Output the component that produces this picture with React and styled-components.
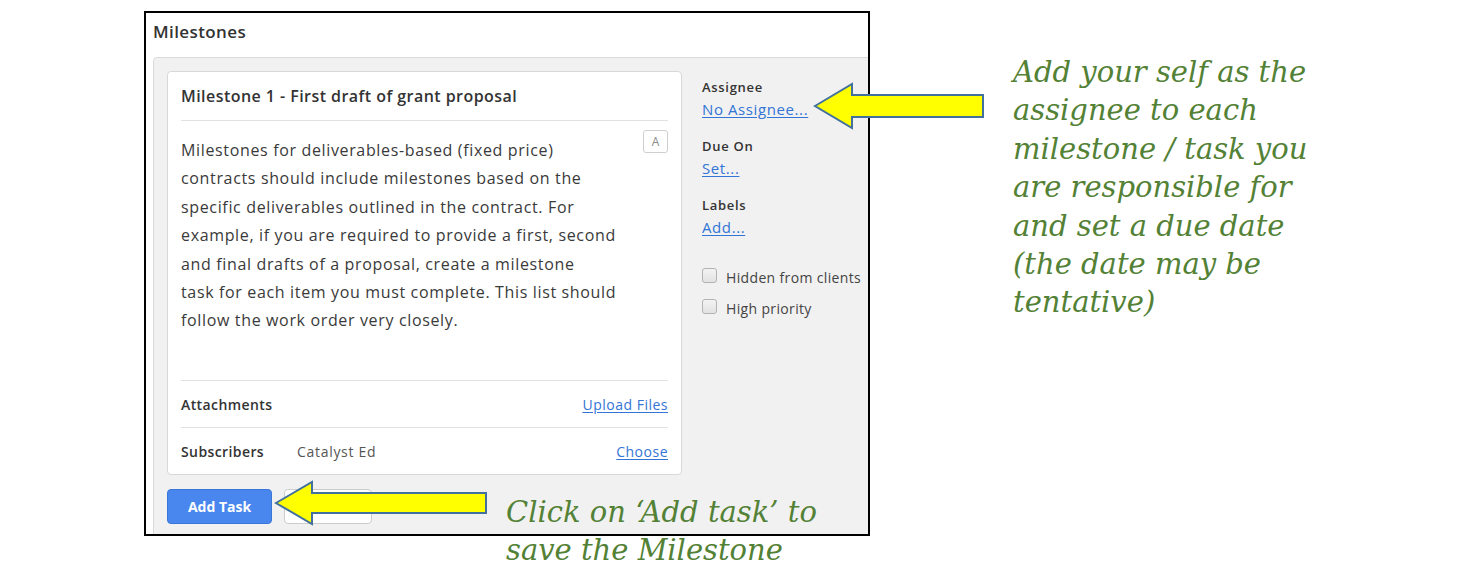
import React from "react";
import styled, { createGlobalStyle } from "styled-components";

const GlobalStyle = createGlobalStyle`
  html, body {
    margin: 0;
    padding: 0;
    background: #ffffff;
  }
  body {
    font-family: "Open Sans", "Liberation Sans", sans-serif;
    color: #333333;
  }
`;

const Stage = styled.div`
  position: relative;
  width: 1483px;
  height: 574px;
  overflow: hidden;
  background: #ffffff;
`;

const Frame = styled.div`
  box-sizing: border-box;
  margin: 11px 0 0 144px;
  width: 726px;
  height: 525px;
  border: 2px solid #000000;
  background: #ffffff;
  overflow: hidden;
  display: flex;
  flex-direction: column;
`;

const FrameHeader = styled.div`
  box-sizing: border-box;
  height: 44px;
  flex-shrink: 0;
  padding: 7px 0 0 7px;
  font-size: 17px;
  line-height: 24px;
  font-weight: 600;
  letter-spacing: 0.4px;
  color: #333333;
`;

const Panel = styled.div`
  box-sizing: border-box;
  flex: 1;
  margin-left: 7px;
  width: 740px;
  padding: 13px;
  background: #f1f1f1;
  border: 1px solid #dadada;
  border-radius: 4px;
`;

const PanelRow = styled.div`
  display: flex;
  align-items: flex-start;
`;

const Card = styled.div`
  box-sizing: border-box;
  width: 515px;
  height: 404px;
  background: #ffffff;
  border: 1px solid #d8d8d8;
  border-radius: 4px;
  display: flex;
  flex-direction: column;
`;

const CardTitle = styled.div`
  box-sizing: border-box;
  height: 49px;
  margin: 0 13px;
  display: flex;
  align-items: center;
  border-bottom: 1px solid #e2e2e2;
  font-size: 16px;
  font-weight: 600;
  letter-spacing: 0.45px;
  color: #333333;
`;

const CardBody = styled.div`
  flex: 1;
  margin: 0 13px;
  display: flex;
  justify-content: space-between;
  align-items: flex-start;
`;

const Description = styled.p`
  margin: 15px 0 0;
  font-size: 16px;
  line-height: 28.4px;
  letter-spacing: 0.65px;
  color: #3a3a3a;
  white-space: nowrap;
`;

const FormatBadge = styled.span`
  box-sizing: border-box;
  margin-top: 9px;
  width: 25px;
  height: 23px;
  display: flex;
  align-items: center;
  justify-content: center;
  border: 1px solid #cfcfcf;
  border-radius: 3px;
  font-size: 12px;
  color: #8a8a8a;
`;

const CardRow = styled.div`
  box-sizing: border-box;
  height: ${(props) => props.height}px;
  margin: 0 13px;
  display: flex;
  align-items: center;
  border-top: 1px solid #e2e2e2;
  font-size: 14px;
  letter-spacing: 0.4px;
`;

const RowLabel = styled.span`
  font-weight: 600;
  color: #333333;
  min-width: ${(props) => (props.wide ? "116px" : "auto")};
`;

const RowValue = styled.span`
  color: #555555;
  flex: 1;
  letter-spacing: 0.7px;
`;

const Spacer = styled.span`
  flex: 1;
`;

const Link = styled.a`
  color: #3375d6;
  text-decoration: underline;
  text-underline-offset: 2px;
  cursor: pointer;
  font-size: ${(props) => (props.small ? "14px" : "15px")};
  letter-spacing: ${(props) => (props.small ? "0.5px" : "0.6px")};
`;

const Side = styled.div`
  margin-left: 20px;
  padding-top: 6px;
  display: flex;
  flex-direction: column;
`;

const SideGroup = styled.div`
  display: flex;
  flex-direction: column;
  margin-bottom: 15px;
`;

const SideLabel = styled.div`
  font-size: 13px;
  font-weight: 600;
  line-height: 20px;
  letter-spacing: 0.7px;
  color: #333333;
`;

const SideLink = styled.div`
  line-height: 24px;
`;

const CheckRow = styled.label`
  display: flex;
  align-items: center;
  gap: 9px;
  height: 26px;
  margin-top: ${(props) => props.top}px;
  font-size: 14px;
  letter-spacing: 0.35px;
  color: #444444;
`;

const Box = styled.span`
  box-sizing: border-box;
  width: 15px;
  height: 15px;
  margin-top: -3px;
  border: 1px solid #b3b3b3;
  border-radius: 3px;
  background: linear-gradient(#f3f3f3, #e2e2e2);
`;

const Buttons = styled.div`
  display: flex;
  gap: 12px;
  margin-top: 14px;
`;

const Button = styled.button`
  box-sizing: border-box;
  height: 35px;
  width: ${(props) => (props.primary ? "105px" : "88px")};
  border-radius: 4px;
  border: 1px solid ${(props) => (props.primary ? "#3a76d8" : "#cccccc")};
  background: ${(props) => (props.primary ? "#4987ee" : "#ffffff")};
  color: ${(props) => (props.primary ? "#ffffff" : "#444444")};
  font-family: "Open Sans", "Liberation Sans", sans-serif;
  font-size: 14px;
  font-weight: 700;
  padding: 0;
`;

const Note = styled.div`
  position: absolute;
  left: ${(props) => props.x}px;
  top: ${(props) => props.y}px;
  font-family: "DejaVu Serif", "Liberation Serif", serif;
  font-style: italic;
  font-size: 29px;
  line-height: 38.4px;
  color: #538135;
  white-space: nowrap;
`;

const ArrowSvg = styled.svg`
  position: absolute;
  left: ${(props) => props.x}px;
  top: ${(props) => props.y}px;
  overflow: visible;
`;

function Arrow({ x, y, width, height, head, shaftTop, shaftBottom }) {
  const mid = height / 2;
  const points = [
    [0, mid],
    [head, 0],
    [head, shaftTop],
    [width, shaftTop],
    [width, shaftBottom],
    [head, shaftBottom],
    [head, height],
  ]
    .map((p) => p.join(","))
    .join(" ");
  return (
    <ArrowSvg x={x} y={y} width={width} height={height}>
      <polygon
        points={points}
        fill="#ffff00"
        stroke="#41719c"
        strokeWidth="2"
        strokeLinejoin="miter"
      />
    </ArrowSvg>
  );
}

export default function App() {
  return (
    <Stage>
      <GlobalStyle />
      <Frame>
        <FrameHeader>Milestones</FrameHeader>
        <Panel>
          <PanelRow>
            <Card>
              <CardTitle>Milestone 1 - First draft of grant proposal</CardTitle>
              <CardBody>
                <Description>
                  Milestones for deliverables-based (fixed price)
                  <br />
                  contracts should include milestones based on the
                  <br />
                  specific deliverables outlined in the contract. For
                  <br />
                  example, if you are required to provide a first, second
                  <br />
                  and final drafts of a proposal, create a milestone
                  <br />
                  task for each item you must complete. This list should
                  <br />
                  follow the work order very closely.
                </Description>
                <FormatBadge>A</FormatBadge>
              </CardBody>
              <CardRow height={47}>
                <RowLabel>Attachments</RowLabel>
                <Spacer />
                <Link small>Upload Files</Link>
              </CardRow>
              <CardRow height={47}>
                <RowLabel wide>Subscribers</RowLabel>
                <RowValue>Catalyst Ed</RowValue>
                <Link small>Choose</Link>
              </CardRow>
            </Card>
            <Side>
              <SideGroup>
                <SideLabel>Assignee</SideLabel>
                <SideLink>
                  <Link>No Assignee...</Link>
                </SideLink>
              </SideGroup>
              <SideGroup>
                <SideLabel>Due On</SideLabel>
                <SideLink>
                  <Link>Set...</Link>
                </SideLink>
              </SideGroup>
              <SideGroup>
                <SideLabel>Labels</SideLabel>
                <SideLink>
                  <Link>Add...</Link>
                </SideLink>
              </SideGroup>
              <CheckRow top={10}>
                <Box />
                Hidden from clients
              </CheckRow>
              <CheckRow top={5}>
                <Box />
                High priority
              </CheckRow>
            </Side>
          </PanelRow>
          <Buttons>
            <Button primary>Add Task</Button>
            <Button>Cancel</Button>
          </Buttons>
        </Panel>
      </Frame>

      <Arrow x={815} y={84} width={168} height={44} head={37} shaftTop={11} shaftBottom={33} />
      <Arrow x={276} y={482} width={210} height={42} head={36} shaftTop={11} shaftBottom={31} />

      <Note x={1013} y={53}>
        Add your self as the
        <br />
        assignee to each
        <br />
        milestone / task you
        <br />
        are responsible for
        <br />
        and set a due date
        <br />
        (the date may be
        <br />
        tentative)
      </Note>
      <Note x={506} y={493}>
        Click on ‘Add task’ to
        <br />
        save the Milestone
      </Note>
    </Stage>
  );
}
